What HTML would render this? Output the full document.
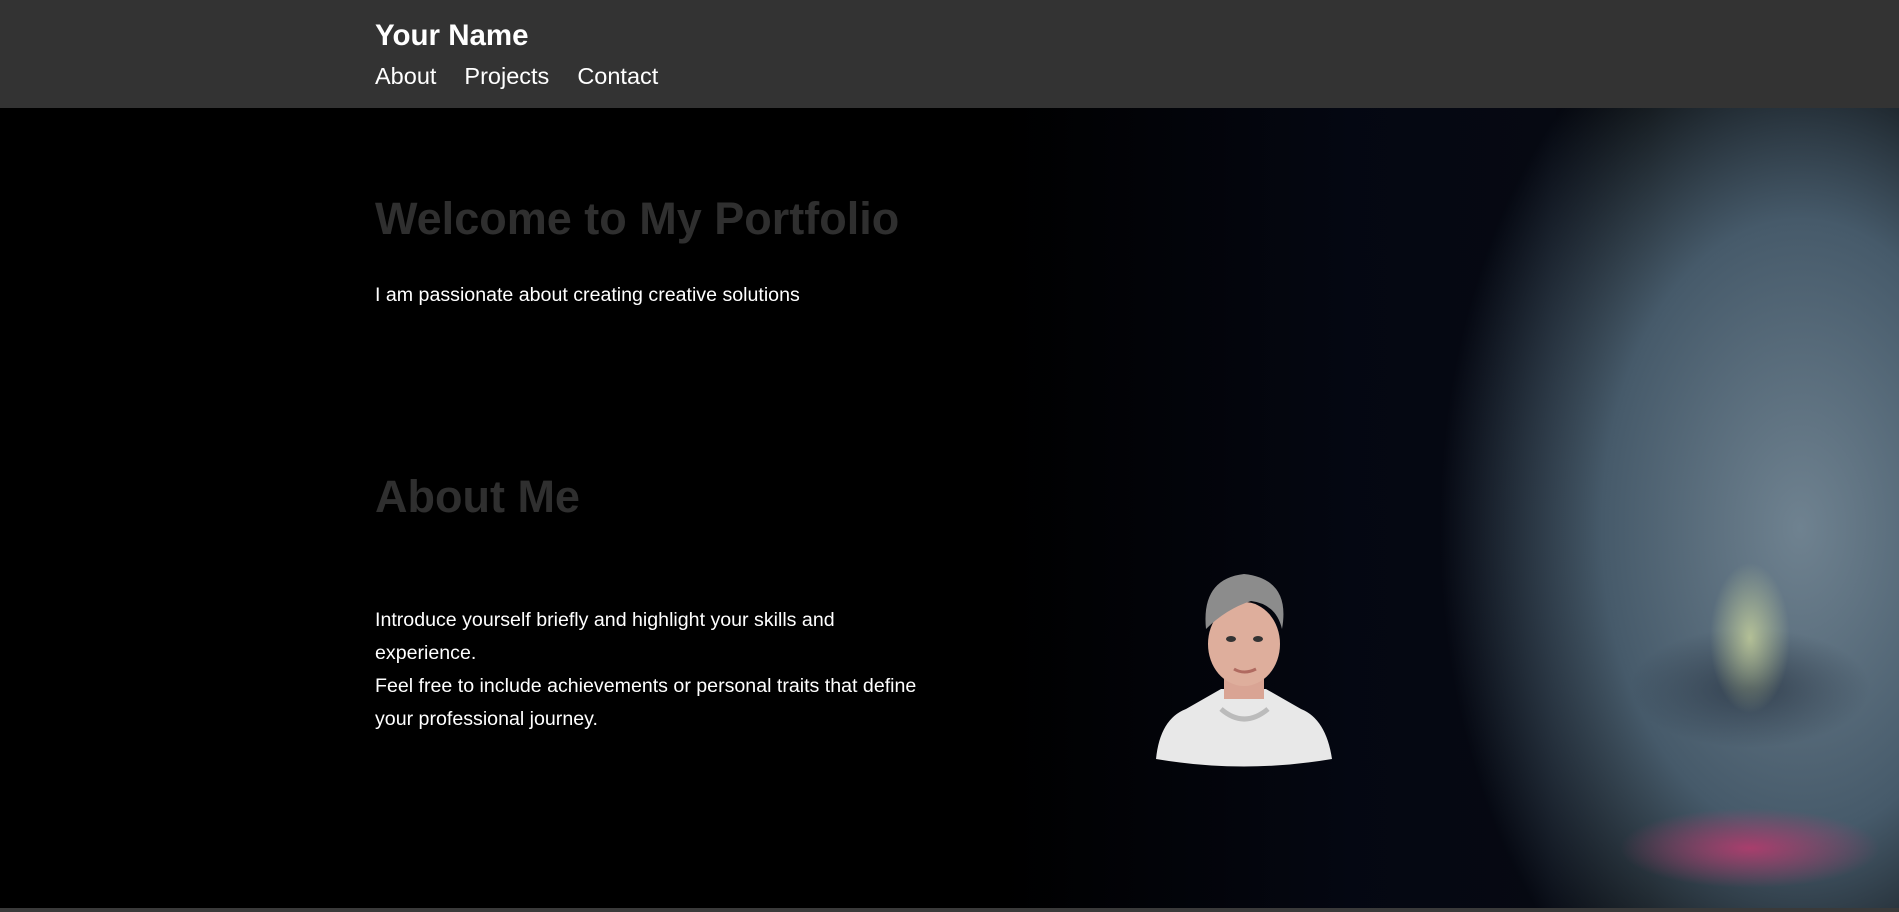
<!DOCTYPE html>
<html><head><meta charset="utf-8"><style>
html,body{margin:0;padding:0;width:1899px;height:912px;overflow:hidden;background:#000;font-family:"Liberation Sans",Arial,sans-serif}
header{position:absolute;left:0;top:0;width:1899px;height:108px;background:#333;}
.name{position:absolute;left:375px;top:19px;color:#fff;font-weight:bold;font-size:29.5px}
nav{position:absolute;left:375px;top:63px;color:#fff;font-size:23.5px}
nav span{margin-right:28px}
.bg{position:absolute;left:0;top:108px;width:1899px;height:800px;overflow:hidden;background:#000}
.face{position:absolute;left:1420px;top:0;width:650px;height:800px;
background:
radial-gradient(ellipse 40px 75px at 330px 530px,rgba(210,220,160,.75),rgba(0,0,0,0)),
radial-gradient(ellipse 130px 40px at 330px 740px,rgba(180,60,110,.9),rgba(0,0,0,0)),
radial-gradient(ellipse 120px 60px at 330px 580px,rgba(30,40,55,.6),rgba(0,0,0,0)),
radial-gradient(ellipse 360px 560px at 380px 420px,#6f8290,#465a6a 55%,rgba(20,30,45,0));}
.hair{position:absolute;left:1000px;top:0;width:650px;height:800px;background:linear-gradient(90deg,rgba(0,0,0,0),rgba(5,8,20,.9) 55%,rgba(10,15,30,.6) 85%,rgba(0,0,0,0))}
h2{position:absolute;left:375px;margin:0;color:#2f2f2f;font-size:45px;font-weight:bold}
p{position:absolute;left:375px;margin:0;color:#fff;font-size:19.6px;line-height:33px}
.avatar{position:absolute;left:1156px;top:569px;width:176px;height:200px}
.bottom{position:absolute;left:0;top:908px;width:1899px;height:4px;background:#3a3a3a}
</style></head><body>
<header><div class="name">Your Name</div><nav><span>About</span><span>Projects</span><span>Contact</span></nav></header>
<div class="bg"><div class="hair"></div><div class="face"></div></div>
<h2 style="top:193px">Welcome to My Portfolio</h2>
<p style="top:279px">I am passionate about creating creative solutions</p>
<h2 style="top:471px">About Me</h2>
<p style="top:604px;width:565px">Introduce yourself briefly and highlight your skills and experience.<br>Feel free to include achievements or personal traits that define your professional journey.</p>
<svg class="avatar" viewBox="0 0 176 200">
<path d="M0 190 Q4 150 30 140 L65 120 L110 120 L145 140 Q170 150 176 190 Q88 205 0 190Z" fill="#e8e8e8"/>
<rect x="68" y="95" width="40" height="35" fill="#d9a494"/>
<ellipse cx="88" cy="75" rx="36" ry="42" fill="#deae9c"/>
<path d="M50 60 Q45 10 88 5 Q135 10 126 60 Q120 35 95 32 Q70 40 50 60Z" fill="#8c8c8c"/>
<ellipse cx="75" cy="70" rx="5" ry="3" fill="#333"/><ellipse cx="102" cy="70" rx="5" ry="3" fill="#333"/>
<path d="M78 100 Q88 106 100 100" stroke="#b06a60" stroke-width="3" fill="none"/>
<path d="M65 140 Q88 160 112 140" stroke="#bbb" stroke-width="5" fill="none"/>
</svg>
<div class="bottom"></div>
</body></html>
